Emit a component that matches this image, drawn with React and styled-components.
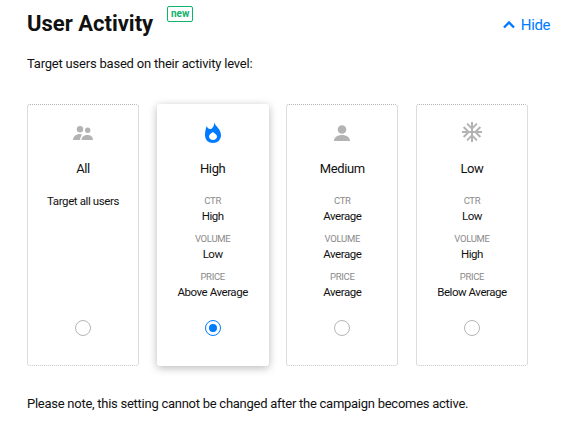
import React from 'react'
import styled, { createGlobalStyle } from 'styled-components'
import { MdAcUnit } from 'react-icons/md'

const GlobalStyle = createGlobalStyle`
  html, body { margin: 0; padding: 0; background: #fff; }
  body { font-family: Roboto, "Liberation Sans", sans-serif; color: #111; }
`

const Page = styled.div`
  width: 573px;
  height: 430px;
  box-sizing: border-box;
  padding: 8px 23px 0 27px;
  overflow: hidden;
`

const Header = styled.div`
  display: flex;
  align-items: flex-start;
  justify-content: space-between;
`

const TitleRow = styled.div`
  display: flex;
  align-items: flex-start;
`

const Title = styled.h2`
  margin: 2px 0 0;
  font-size: 22px;
  line-height: 28px;
  font-weight: 700;
  color: #111;
`

const NewBadge = styled.span`
  margin-left: 14px;
  margin-top: -2px;
  box-sizing: border-box;
  width: 26px;
  height: 16px;
  border: 1px solid #0fb36b;
  border-radius: 2px;
  color: #0fb36b;
  font-size: 10px;
  font-weight: 700;
  line-height: 13px;
  text-align: center;
`

const HideLink = styled.a`
  display: flex;
  align-items: center;
  margin-top: 5px;
  color: #007bff;
  font-size: 15px;
  line-height: 18px;
  letter-spacing: -0.4px;
`

const Intro = styled.p`
  margin: 17px 0 0;
  font-size: 13px;
  line-height: 18px;
  letter-spacing: -0.21px;
`

const Cards = styled.div`
  display: flex;
  gap: 17.67px;
  margin-top: 31px;
`

const Card = styled.div`
  box-sizing: border-box;
  width: 112px;
  height: 262px;
  padding-top: 15px;
  display: flex;
  flex-direction: column;
  align-items: center;
  text-align: center;
  border-radius: 3px;
  background: #fff;
  border: 1px solid ${p => (p.$active ? 'transparent' : '#dcdcdc')};
  border-top: 1px ${p => (p.$active ? 'solid transparent' : 'dotted #b5b5b5')};
  border-bottom: 1px ${p => (p.$active ? 'solid transparent' : 'dotted #c8c8c8')};
  box-shadow: ${p => (p.$active ? '0 2px 8px rgba(0, 0, 0, 0.28)' : 'none')};
`

const IconSlot = styled.div`
  height: 24px;
  display: flex;
  align-items: center;
  justify-content: center;
  color: ${p => (p.$active ? '#007bff' : '#b3b3b3')};
`

const Name = styled.div`
  margin-top: 16px;
  font-size: 13px;
  line-height: 18px;
  letter-spacing: -0.4px;
`

const Description = styled.div`
  margin-top: 15px;
  font-size: 11.5px;
  line-height: 16px;
  letter-spacing: -0.4px;
`

const Stats = styled.div`
  margin-top: 17px;
  display: flex;
  flex-direction: column;
  gap: 9px;
`

const Label = styled.div`
  font-size: 9.5px;
  line-height: 12px;
  letter-spacing: -0.3px;
  color: #8a8a8a;
`

const Value = styled.div`
  margin-top: 1px;
  font-size: 11.5px;
  line-height: 16px;
  letter-spacing: -0.45px;
`

const Radio = styled.div`
  margin-top: auto;
  margin-bottom: 29px;
  box-sizing: border-box;
  width: 16px;
  height: 16px;
  border-radius: 50%;
  border: 1px solid ${p => (p.$active ? '#007bff' : '#b5b5b5')};
  display: flex;
  align-items: center;
  justify-content: center;

  &::after {
    content: '';
    display: ${p => (p.$active ? 'block' : 'none')};
    width: 8px;
    height: 8px;
    border-radius: 50%;
    background: #007bff;
  }
`

const Note = styled.p`
  margin: 29px 0 0;
  font-size: 13px;
  line-height: 18px;
  letter-spacing: -0.26px;
`

const ChevronUp = () => (
  <svg width="24" height="24" viewBox="0 0 24 24" fill="none" stroke="currentColor" strokeWidth="2.4">
    <path d="M7 14.5l5-5 5 5" />
  </svg>
)

const PeopleIcon = () => (
  <svg width="24" height="24" viewBox="0 0 24 24" fill="currentColor">
    <circle cx="9" cy="9.3" r="3.2" />
    <circle cx="16.7" cy="10.3" r="2.7" />
    <path d="M2 20C2.3 16.2 5 14 9 14l2 .4C10 16 9.2 18 9 20Z" />
    <path d="M10.5 20C10.7 16.6 13 15 16.5 15S21.8 16.6 22 20Z" />
  </svg>
)

const FlameIcon = () => (
  <svg width="24" height="24" viewBox="0 0 24 24" fill="currentColor">
    <path
      fillRule="evenodd"
      d="M13 2C14 6 20 9 20 15C20 20 16.5 23 12 23C7.5 23 4 20 4 15C4 11 5 8 5.7 6C6.5 8 8 9.5 9.7 9C12 8.5 13.5 5 13 2ZM12 12C10 13.5 8 14.5 8 16.5C8 18.5 10 20 12 20C14 20 16 18.5 16 16.5C16 14.5 14 14 12 12Z"
    />
  </svg>
)

const PersonIcon = () => (
  <svg width="24" height="24" viewBox="0 0 24 24" fill="currentColor">
    <circle cx="12" cy="9.5" r="4.3" />
    <path d="M4 21C4 17 8 15 12 15S20 17 20 21Z" />
  </svg>
)

const levels = [
  { name: 'All', icon: <PeopleIcon />, description: 'Target all users' },
  { name: 'High', icon: <FlameIcon />, active: true, stats: ['High', 'Low', 'Above Average'] },
  { name: 'Medium', icon: <PersonIcon />, stats: ['Average', 'Average', 'Average'] },
  { name: 'Low', icon: <MdAcUnit size={24} />, stats: ['Low', 'High', 'Below Average'] },
]

const labels = ['CTR', 'VOLUME', 'PRICE']

export default function App() {
  return (
    <Page>
      <GlobalStyle />
      <Header>
        <TitleRow>
          <Title>User Activity</Title>
          <NewBadge>new</NewBadge>
        </TitleRow>
        <HideLink>
          <ChevronUp />
          Hide
        </HideLink>
      </Header>
      <Intro>Target users based on their activity level:</Intro>
      <Cards>
        {levels.map(({ name, icon, description, stats, active }) => (
          <Card key={name} $active={active}>
            <IconSlot $active={active}>{icon}</IconSlot>
            <Name>{name}</Name>
            {description && <Description>{description}</Description>}
            {stats && (
              <Stats>
                {stats.map((value, i) => (
                  <div key={labels[i]}>
                    <Label>{labels[i]}</Label>
                    <Value>{value}</Value>
                  </div>
                ))}
              </Stats>
            )}
            <Radio $active={active} />
          </Card>
        ))}
      </Cards>
      <Note>Please note, this setting cannot be changed after the campaign becomes active.</Note>
    </Page>
  )
}
